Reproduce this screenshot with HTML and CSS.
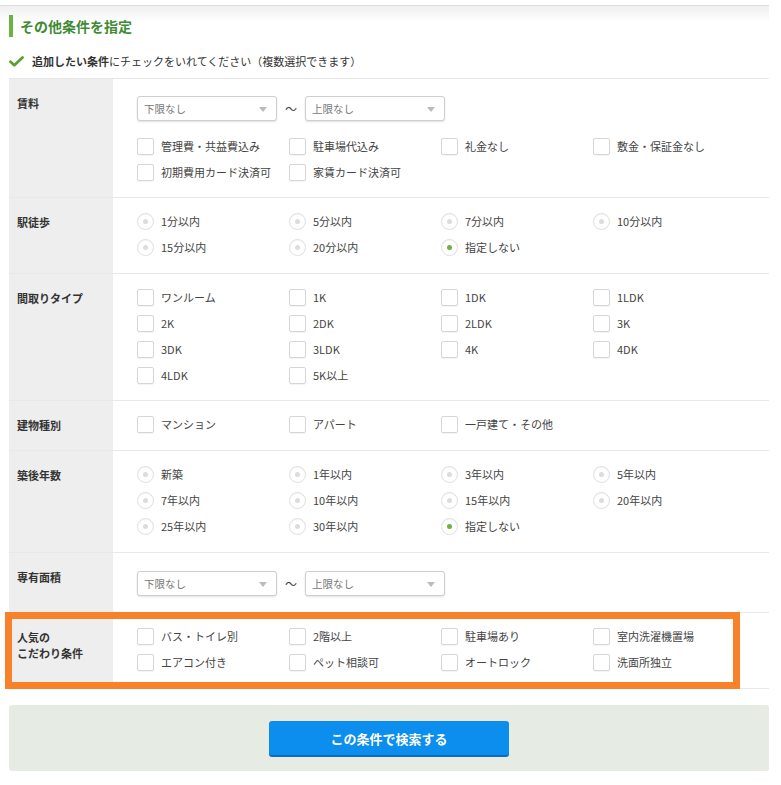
FILE: index.html
```html
<!DOCTYPE html>
<html lang="ja">
<head>
<meta charset="utf-8">
<title>その他条件を指定</title>
<link rel="stylesheet" href="styles.css">
</head>
<body>
<div class="page">
  <div class="head">
    <h2 class="title">その他条件を指定</h2>
  </div>
  <p class="note">
    <svg class="check" width="15" height="11" viewBox="0 0 15 11"><path d="M1.5 5.8 L5.3 9.2 L13.5 1.5" fill="none" stroke="#5aa22e" stroke-width="2.8" stroke-linecap="round" stroke-linejoin="round"/></svg>
    <span><b>追加したい条件</b>にチェックをいれてください（複数選択できます）</span>
  </p>

  <div class="table">
    <div class="row">
      <div class="lbl">賃料</div>
      <div class="cnt cnt-rent">
        <div class="range">
          <div class="sel">下限なし<i class="arr"></i></div>
          <span class="tilde">〜</span>
          <div class="sel">上限なし<i class="arr"></i></div>
        </div>
        <div class="opts">
          <label class="opt"><span class="cb"></span>管理費・共益費込み</label>
          <label class="opt"><span class="cb"></span>駐車場代込み</label>
          <label class="opt"><span class="cb"></span>礼金なし</label>
          <label class="opt"><span class="cb"></span>敷金・保証金なし</label>
          <label class="opt"><span class="cb"></span>初期費用カード決済可</label>
          <label class="opt"><span class="cb"></span>家賃カード決済可</label>
        </div>
      </div>
    </div>

    <div class="row">
      <div class="lbl">駅徒歩</div>
      <div class="cnt">
        <div class="opts">
          <label class="opt"><span class="rd"></span>1分以内</label>
          <label class="opt"><span class="rd"></span>5分以内</label>
          <label class="opt"><span class="rd"></span>7分以内</label>
          <label class="opt"><span class="rd"></span>10分以内</label>
          <label class="opt"><span class="rd"></span>15分以内</label>
          <label class="opt"><span class="rd"></span>20分以内</label>
          <label class="opt"><span class="rd on"></span>指定しない</label>
        </div>
      </div>
    </div>

    <div class="row">
      <div class="lbl">間取りタイプ</div>
      <div class="cnt cnt-tight">
        <div class="opts">
          <label class="opt"><span class="cb"></span>ワンルーム</label>
          <label class="opt"><span class="cb"></span>1K</label>
          <label class="opt"><span class="cb"></span>1DK</label>
          <label class="opt"><span class="cb"></span>1LDK</label>
          <label class="opt"><span class="cb"></span>2K</label>
          <label class="opt"><span class="cb"></span>2DK</label>
          <label class="opt"><span class="cb"></span>2LDK</label>
          <label class="opt"><span class="cb"></span>3K</label>
          <label class="opt"><span class="cb"></span>3DK</label>
          <label class="opt"><span class="cb"></span>3LDK</label>
          <label class="opt"><span class="cb"></span>4K</label>
          <label class="opt"><span class="cb"></span>4DK</label>
          <label class="opt"><span class="cb"></span>4LDK</label>
          <label class="opt"><span class="cb"></span>5K以上</label>
        </div>
      </div>
    </div>

    <div class="row">
      <div class="lbl">建物種別</div>
      <div class="cnt">
        <div class="opts">
          <label class="opt"><span class="cb"></span>マンション</label>
          <label class="opt"><span class="cb"></span>アパート</label>
          <label class="opt"><span class="cb"></span>一戸建て・その他</label>
        </div>
      </div>
    </div>

    <div class="row">
      <div class="lbl">築後年数</div>
      <div class="cnt">
        <div class="opts">
          <label class="opt"><span class="rd"></span>新築</label>
          <label class="opt"><span class="rd"></span>1年以内</label>
          <label class="opt"><span class="rd"></span>3年以内</label>
          <label class="opt"><span class="rd"></span>5年以内</label>
          <label class="opt"><span class="rd"></span>7年以内</label>
          <label class="opt"><span class="rd"></span>10年以内</label>
          <label class="opt"><span class="rd"></span>15年以内</label>
          <label class="opt"><span class="rd"></span>20年以内</label>
          <label class="opt"><span class="rd"></span>25年以内</label>
          <label class="opt"><span class="rd"></span>30年以内</label>
          <label class="opt"><span class="rd on"></span>指定しない</label>
        </div>
      </div>
    </div>

    <div class="row">
      <div class="lbl">専有面積</div>
      <div class="cnt cnt-area">
        <div class="range">
          <div class="sel">下限なし<i class="arr"></i></div>
          <span class="tilde">〜</span>
          <div class="sel">上限なし<i class="arr"></i></div>
        </div>
      </div>
    </div>

    <div class="row row-pop">
      <div class="lbl">人気の<br>こだわり条件</div>
      <div class="cnt">
        <div class="opts">
          <label class="opt"><span class="cb"></span>バス・トイレ別</label>
          <label class="opt"><span class="cb"></span>2階以上</label>
          <label class="opt"><span class="cb"></span>駐車場あり</label>
          <label class="opt"><span class="cb"></span>室内洗濯機置場</label>
          <label class="opt"><span class="cb"></span>エアコン付き</label>
          <label class="opt"><span class="cb"></span>ペット相談可</label>
          <label class="opt"><span class="cb"></span>オートロック</label>
          <label class="opt"><span class="cb"></span>洗面所独立</label>
        </div>
      </div>
      <div class="highlight"></div>
    </div>
  </div>

  <div class="submit">
    <button class="btn" type="button">この条件で検索する</button>
  </div>
</div>
</body>
</html>
```

FILE: styles.css
```css
* { box-sizing: border-box; }
body {
  margin: 0;
  background: #fff;
  font-family: "Noto Sans CJK JP", "Noto Sans", sans-serif;
  font-size: 11px;
  color: #333;
}
.page {
  width: 769px;
  padding-top: 5px;
}
.head {
  border-top: 1px solid #dedede;
  background: linear-gradient(#efefef, #fff 16px);
  padding: 9px 0 0 9px;
}
.title {
  margin: 0;
  height: 22px;
  line-height: 22px;
  border-left: 4px solid #6db33f;
  padding-left: 7px;
  font-size: 14px;
  font-weight: bold;
  color: #3f8b33;
}
.note {
  margin: 14px 0 7px 9px;
  height: 20px;
  display: flex;
  align-items: center;
  gap: 8px;
  font-size: 11px;
  color: #333;
}
.note b { font-weight: bold; }
.check { display: block; flex: none; }

.table {
  margin-left: 9px;
  border-top: 1px solid #e6e6e6;
}
.row {
  display: grid;
  grid-template-columns: 104px 1fr;
  border-bottom: 1px solid #e8e8e8;
  position: relative;
}
.lbl {
  background: #eeeeee;
  padding: 16px 8px 0 8px;
  line-height: 16px;
  font-weight: bold;
  color: #333;
}
.cnt {
  padding: 10px 0 13px 24px;
}
.cnt-tight { padding-bottom: 12px; }
.cnt-rent { padding-top: 17px; padding-bottom: 12px; }
.cnt-area { padding-top: 18px; padding-bottom: 16px; }
.range {
  display: flex;
  align-items: center;
  height: 25px;
}
.cnt-rent .range { margin-bottom: 12px; }
.sel {
  position: relative;
  width: 140px;
  height: 25px;
  border: 1px solid #cfcfcf;
  border-radius: 3px;
  box-shadow: 0 1px 2px rgba(0,0,0,0.12);
  background: #fff;
  padding-left: 6px;
  line-height: 23px;
  font-size: 10.5px;
  color: #777;
}
.arr {
  position: absolute;
  right: 9px;
  top: 10px;
  width: 0;
  height: 0;
  border-left: 4px solid transparent;
  border-right: 4px solid transparent;
  border-top: 5px solid #bbb;
}
.tilde {
  width: 28px;
  text-align: center;
  font-size: 12px;
  color: #444;
}
.opts {
  display: grid;
  grid-template-columns: repeat(4, 152px);
  grid-auto-rows: 26px;
}
.opt {
  display: flex;
  align-items: center;
  gap: 7px;
  color: #444;
  white-space: nowrap;
}
.cb {
  flex: none;
  width: 17px;
  height: 17px;
  border: 1px solid #d6d6d6;
  border-radius: 2px;
  background: #fff;
  box-shadow: 0 1px 1px rgba(0,0,0,0.05);
}
.rd {
  flex: none;
  position: relative;
  width: 17px;
  height: 17px;
  border: 1px solid #dedede;
  border-radius: 50%;
  background: #fff;
  box-shadow: inset 0 1px 1px rgba(0,0,0,0.04);
}
.rd::after {
  content: "";
  position: absolute;
  left: 5px;
  top: 5px;
  width: 5px;
  height: 5px;
  border-radius: 50%;
  background: #dcdcdc;
}
.rd.on::after { background: #6db33f; }

.highlight {
  position: absolute;
  left: -4px;
  top: -1px;
  width: 735px;
  height: 77px;
  border: 7px solid #f8822a;
  pointer-events: none;
}

.submit {
  margin: 16px 0 0 9px;
  background: #e6ebe3;
  border-radius: 3px;
  padding: 16px 0;
  display: flex;
  justify-content: center;
}
.btn {
  width: 240px;
  height: 34px;
  border: 0;
  border-radius: 3px;
  background: #0b8eee;
  box-shadow: 0 2px 0 #0a6fc0;
  color: #fff;
  font-family: "Noto Sans CJK JP", sans-serif;
  font-size: 13px;
  font-weight: bold;
}
```
